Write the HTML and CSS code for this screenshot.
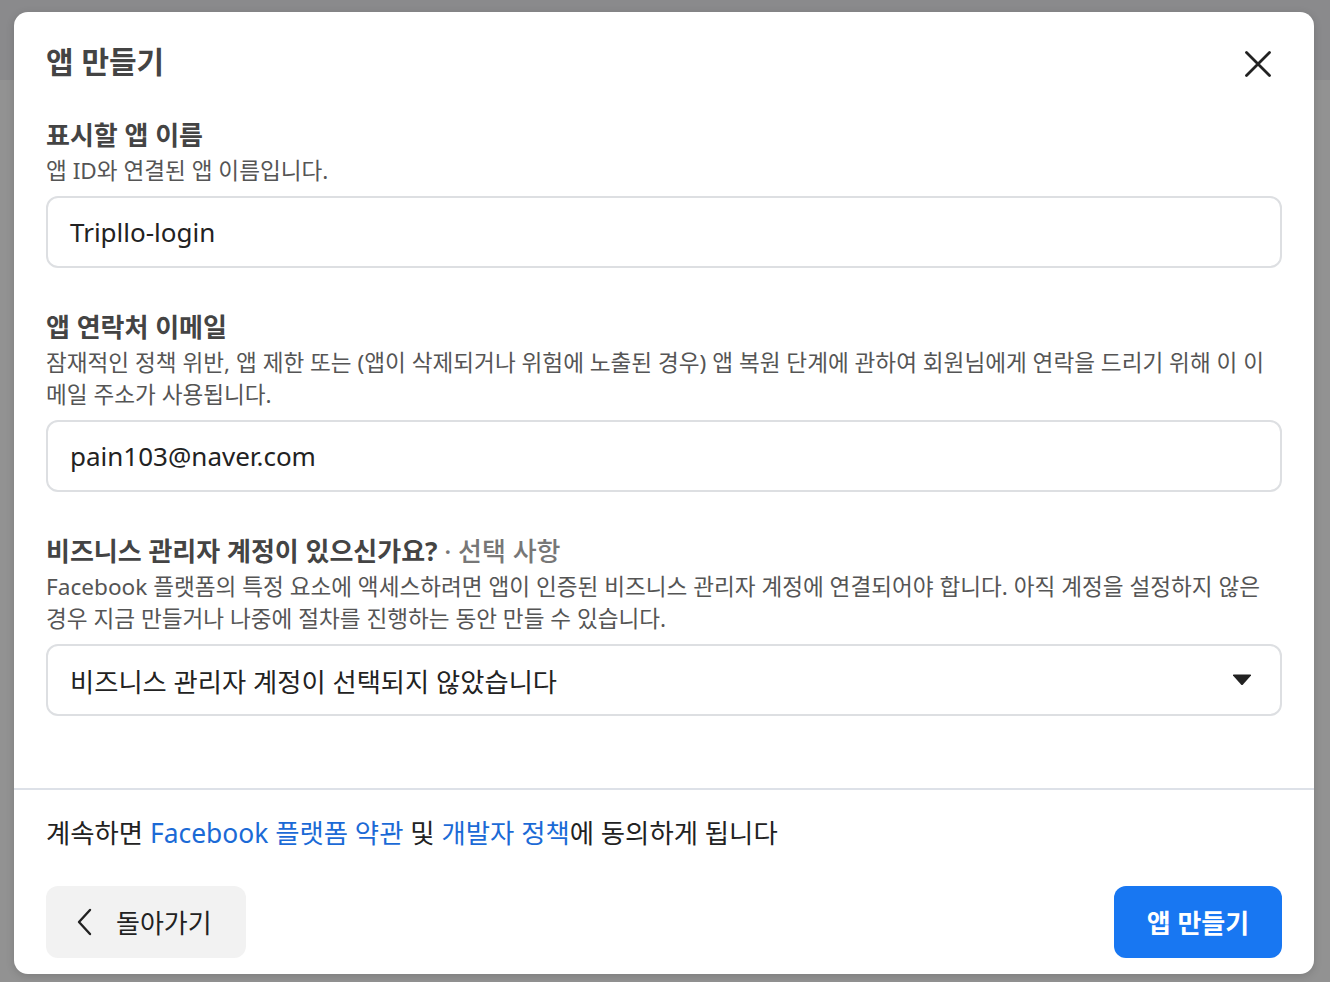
FILE: index.html
```html
<!DOCTYPE html>
<html lang="ko">
<head>
<meta charset="utf-8">
<link rel="stylesheet" href="styles.css">
</head>
<body>
<div class="backdrop">
  <div class="topband"></div>
  <div class="modal">
    <div class="modal-body">
      <div class="header">
        <h1 class="title">앱 만들기</h1>
        <button class="close" aria-label="닫기">
          <svg width="26" height="26" viewBox="0 0 26 26"><path d="M1.5 1.5 L24.5 24.5 M24.5 1.5 L1.5 24.5" stroke="#222" stroke-width="2.8" stroke-linecap="round"/></svg>
        </button>
      </div>
      <div class="field">
        <div class="label">표시할 앱 이름</div>
        <div class="desc">앱 ID와 연결된 앱 이름입니다.</div>
        <div class="input">Tripllo-login</div>
      </div>
      <div class="field">
        <div class="label">앱 연락처 이메일</div>
        <div class="desc">잠재적인 정책 위반, 앱 제한 또는 (앱이 삭제되거나 위험에 노출된 경우) 앱 복원 단계에 관하여 회원님에게 연락을 드리기 위해 이 이메일 주소가 사용됩니다.</div>
        <div class="input">pain103@naver.com</div>
      </div>
      <div class="field">
        <div class="label">비즈니스 관리자 계정이 있으신가요? <span class="optional">· 선택 사항</span></div>
        <div class="desc">Facebook 플랫폼의 특정 요소에 액세스하려면 앱이 인증된 비즈니스 관리자 계정에 연결되어야 합니다. 아직 계정을 설정하지 않은 경우 지금 만들거나 나중에 절차를 진행하는 동안 만들 수 있습니다.</div>
        <div class="input select">
          <span>비즈니스 관리자 계정이 선택되지 않았습니다</span>
          <svg width="20" height="12" viewBox="0 0 20 12"><path d="M1 1.5 Q0.5 0.5 2 0.5 L18 0.5 Q19.5 0.5 19 1.5 L11 10.5 Q10 11.5 9 10.5 Z" fill="#222"/></svg>
        </div>
      </div>
    </div>
    <div class="footer">
      <p class="terms">계속하면 <a href="#">Facebook 플랫폼 약관</a> 및 <a href="#">개발자 정책</a>에 동의하게 됩니다</p>
      <div class="actions">
        <button class="btn back">
          <svg width="16" height="28" viewBox="0 0 16 28"><path d="M14 2 L3 14 L14 26" stroke="#222" stroke-width="2.4" fill="none" stroke-linecap="round" stroke-linejoin="round"/></svg>
          <span>돌아가기</span>
        </button>
        <button class="btn primary">앱 만들기</button>
      </div>
    </div>
  </div>
</div>
</body>
</html>
```

FILE: styles.css
```css
* { box-sizing: border-box; }
html, body { margin: 0; padding: 0; }
body {
  font-family: "Noto Sans", "Noto Sans CJK KR", sans-serif;
  color: #1c1e21;
  width: 1330px;
  height: 982px;
  overflow: hidden;
}
.backdrop {
  position: relative;
  width: 1330px;
  height: 982px;
  background: #929292;
  padding: 12px 16px 8px 14px;
}
.topband {
  position: absolute;
  left: 0; top: 0; right: 0;
  height: 80px;
  background: #8a8a8c;
}
.modal {
  position: relative;
  background: #fff;
  border-radius: 14px;
  height: 962px;
  display: flex;
  flex-direction: column;
  box-shadow: 0 2px 8px rgba(0,0,0,0.15);
}
.modal-body {
  padding: 30px 32px 0 32px;
  flex: 1;
}
.header {
  display: flex;
  justify-content: space-between;
  align-items: center;
  height: 40px;
  margin-bottom: 35px;
}
.title {
  margin: 0;
  font-size: 30px;
  font-weight: 700;
  color: #444;
  line-height: 40px;
}
.close {
  border: 0;
  background: none;
  padding: 0;
  width: 26px;
  height: 26px;
  margin-right: 11px;
  margin-top: 4px;
  display: flex;
}
.field { margin-bottom: 41px; }
.label {
  font-size: 26px;
  font-weight: 700;
  color: #444;
  line-height: 36px;
  margin-bottom: 2px;
}
.optional { font-weight: 500; color: #777; }
.desc {
  font-size: 22.6px;
  color: #555;
  line-height: 32px;
}
.input {
  margin-top: 9px;
  height: 72px;
  border: 2px solid #dddfe2;
  border-radius: 12px;
  padding: 0 22px;
  display: flex;
  align-items: center;
  font-size: 26px;
  color: #222;
}
.select { justify-content: space-between; font-size: 26.3px; }
.select svg { margin-right: 6px; }
.footer {
  border-top: 2px solid #dde1e8;
  padding: 26px 32px 16px 32px;
}
.terms {
  margin: 0;
  font-size: 26.4px;
  line-height: 34px;
  color: #222;
}
.terms a { color: #1b6ad6; text-decoration: none; }
.actions {
  display: flex;
  justify-content: space-between;
  margin-top: 36px;
}
.btn {
  border: 0;
  height: 72px;
  border-radius: 12px;
  font-family: inherit;
  font-size: 26px;
  display: flex;
  align-items: center;
}
.back {
  background: #f2f2f2;
  width: 200px;
  padding: 0 0 0 30px;
  gap: 24px;
  color: #222;
}
.primary {
  background: #1877f2;
  color: #fff;
  font-weight: 700;
  width: 168px;
  justify-content: center;
}
```
